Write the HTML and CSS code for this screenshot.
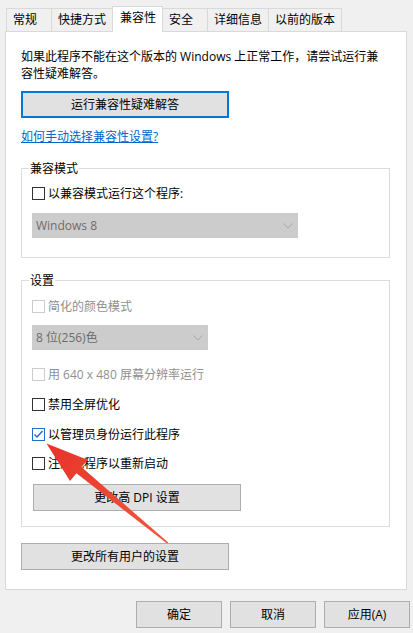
FILE: index.html
```html
<!DOCTYPE html>
<html lang="zh-CN">
<head>
<meta charset="utf-8">
<title>属性 - 兼容性</title>
<link rel="stylesheet" href="styles.css">
</head>
<body>
<div class="dialog">
  <div class="tabs">
    <div class="tab">常规</div>
    <div class="tab">快捷方式</div>
    <div class="tab tab--active">兼容性</div>
    <div class="tab">安全</div>
    <div class="tab">详细信息</div>
    <div class="tab">以前的版本</div>
  </div>

  <div class="panel">
    <p class="intro">如果此程序不能在这个版本的 Windows 上正常工作，请尝试运行兼容性疑难解答。</p>
    <button class="btn btn--wide btn--focus">运行兼容性疑难解答</button>
    <a class="link" href="#">如何手动选择兼容性设置?</a>

    <div class="group group--compat">
      <div class="group-title">兼容模式</div>
      <label class="check check--first">
        <span class="box"></span>
        <span>以兼容模式运行这个程序:</span>
      </label>
      <div class="select select--long select--compat">
        <span>Windows 8</span>
        <svg class="chev" width="10" height="6" viewBox="0 0 10 6"><polyline points="0.5,0.5 5,5 9.5,0.5" fill="none" stroke="#a8a8a8" stroke-width="1"/></svg>
      </div>
    </div>

    <div class="group group--settings">
      <div class="group-title">设置</div>
      <label class="check check--disabled row-color">
        <span class="box"></span>
        <span>简化的颜色模式</span>
      </label>
      <div class="select select--short select--color">
        <span>8 位(256)色</span>
        <svg class="chev" width="10" height="6" viewBox="0 0 10 6"><polyline points="0.5,0.5 5,5 9.5,0.5" fill="none" stroke="#a8a8a8" stroke-width="1"/></svg>
      </div>
      <label class="check check--disabled row-640">
        <span class="box"></span>
        <span>用 640 x 480 屏幕分辨率运行</span>
      </label>
      <label class="check row-fullscreen">
        <span class="box"></span>
        <span>禁用全屏优化</span>
      </label>
      <label class="check check--checked row-admin">
        <span class="box"><svg width="11" height="11" viewBox="0 0 11 11"><polyline points="1.5,5.5 4,8 9.5,2" fill="none" stroke="#1f6fc9" stroke-width="1.4"/></svg></span>
        <span>以管理员身份运行此程序</span>
      </label>
      <label class="check row-restart">
        <span class="box"></span>
        <span>注册此程序以重新启动</span>
      </label>
      <button class="btn btn--wide btn--dpi">更改高 DPI 设置</button>
    </div>

    <button class="btn btn--wide btn--all">更改所有用户的设置</button>
  </div>

  <div class="actions">
    <button class="btn btn--action">确定</button>
    <button class="btn btn--action">取消</button>
    <button class="btn btn--action">应用(A)</button>
  </div>

  <svg class="arrow" width="413" height="633" viewBox="0 0 413 633">
    <defs>
      <linearGradient id="ag" x1="0" y1="0" x2="1" y2="1">
        <stop offset="0" stop-color="#e8322b"/>
        <stop offset="1" stop-color="#ef5a3c"/>
      </linearGradient>
    </defs>
    <polygon points="46.5,443.5 88,460 81.4,467 168.3,542.4 167,543.6 76.4,473.2 70,481" fill="url(#ag)"/>
  </svg>
</div>
</body>
</html>
```

FILE: styles.css
```css
* { box-sizing: border-box; }

html, body {
  margin: 0;
  padding: 0;
  background: #f0f0f0;
}

body {
  font-family: "Open Sans", "Noto Sans CJK SC", sans-serif;
  font-size: 12px;
  line-height: 17px;
  color: #000;
}

.dialog {
  position: relative;
  width: 413px;
  height: 633px;
}

/* ---------- tabs ---------- */
.tabs {
  display: flex;
  align-items: flex-end;
  padding: 6px 0 0 6px;
  height: 31px;
}

.tab {
  min-width: 46px;
  height: 23px;
  padding: 2px 6px 3px;
  border: 1px solid #d9d9d9;
  border-bottom: none;
  margin-right: -1px;
  background: #f0f0f0;
  white-space: nowrap;
}

.tab--active {
  position: relative;
  z-index: 1;
  height: 26px;
  margin-bottom: -1px;
  background: #fff;
  padding: 2px 6px 6px 7px;
}

/* ---------- panel ---------- */
.panel {
  margin: 0 6px 0 5px;
  width: 402px;
  height: 559px;
  padding: 16px 16px 19px 15px;
  background: #fff;
  border: 1px solid #d9d9d9;
  display: flex;
  flex-direction: column;
  align-items: flex-start;
}

.intro {
  margin: 0;
  padding-right: 4px;
}

.btn {
  font: inherit;
  color: #000;
  background: #e1e1e1;
  border: 1px solid #adadad;
  height: 27px;
  padding: 0;
  margin: 0;
  text-align: center;
}

.btn--wide { width: 208px; }

.btn--focus {
  margin-top: 9px;
  border: 2px solid #0078d7;
}

.link {
  margin-top: 10px;
  color: #0066cc;
  text-decoration: underline;
}

/* ---------- group boxes ---------- */
.group {
  width: 369px;
  border: 1px solid #dcdcdc;
  padding: 0 10px;
  display: flex;
  flex-direction: column;
  align-items: flex-start;
}

.group--compat {
  margin-top: 23px;
  padding-bottom: 19px;
}

.group--settings {
  margin-top: 22px;
  padding-bottom: 15px;
}

.group-title {
  margin: -9px 0 0 -3px;
  padding: 0 1px;
  background: #fff;
}

/* ---------- checkboxes ---------- */
.check {
  display: flex;
  align-items: center;
  height: 17px;
  white-space: nowrap;
}

.box {
  width: 13px;
  height: 13px;
  border: 1px solid #333;
  background: #fff;
  margin-right: 3px;
  display: flex;
  align-items: center;
  justify-content: center;
}

.check--disabled { color: #8f8f8f; }
.check--disabled .box { border-color: #cccccc; }
.check--checked .box { border-color: #1f6fc9; }

.check--first { margin-top: 8px; }
.row-color { margin-top: 9px; }
.row-640 { margin-top: 16px; }
.row-fullscreen { margin-top: 13px; }
.row-admin { margin-top: 13px; }
.row-restart { margin-top: 12px; }

/* ---------- selects ---------- */
.select {
  height: 25px;
  background: #cccccc;
  color: #6d6d6d;
  display: flex;
  align-items: center;
  justify-content: space-between;
  padding: 0 5px 0 4px;
}

.select--long { width: 266px; }
.select--short { width: 176px; }
.select--compat { margin-top: 11px; }
.select--color { margin-top: 10px; }

.chev { display: block; }

.btn--dpi {
  margin-top: 12px;
  margin-left: 1px;
}

.btn--all { margin-top: 16px; }

/* ---------- bottom actions ---------- */
.actions {
  display: flex;
  justify-content: flex-end;
  gap: 8px;
  padding-right: 3px;
  margin-top: 11px;
}

.btn--action { width: 86px; }

/* ---------- annotation arrow ---------- */
.arrow {
  position: absolute;
  left: 0;
  top: 0;
  pointer-events: none;
}
```
